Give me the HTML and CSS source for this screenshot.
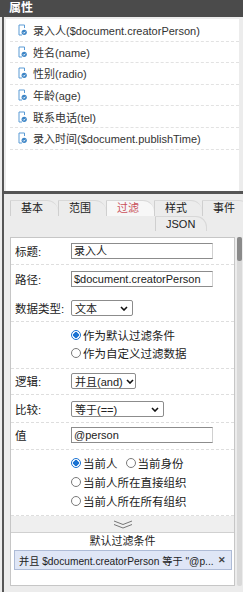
FILE: index.html
```html
<!DOCTYPE html>
<html>
<head>
  <title>属性</title>
  <link rel="stylesheet" href="styles.css">
</head>
<body>
  <div class="title-bar">属性</div>
  <div class="frame">
    <!-- field list -->
    <ul class="field-list">
      <li><svg class="doc-icon" viewBox="0 0 9 12"><path d="M6.5 4V1H1V11H4" fill="none" stroke="#5b9bd5"/><circle cx="6.2" cy="8.3" r="2.6" fill="#3d85c6"/><path d="M5 8.4l.9.9 1.5-1.6" stroke="#fff" stroke-width=".9" fill="none"/></svg>录入人($document.creatorPerson)</li>
      <li><svg class="doc-icon" viewBox="0 0 9 12"><path d="M6.5 4V1H1V11H4" fill="none" stroke="#5b9bd5"/><circle cx="6.2" cy="8.3" r="2.6" fill="#3d85c6"/><path d="M5 8.4l.9.9 1.5-1.6" stroke="#fff" stroke-width=".9" fill="none"/></svg>姓名(name)</li>
      <li><svg class="doc-icon" viewBox="0 0 9 12"><path d="M6.5 4V1H1V11H4" fill="none" stroke="#5b9bd5"/><circle cx="6.2" cy="8.3" r="2.6" fill="#3d85c6"/><path d="M5 8.4l.9.9 1.5-1.6" stroke="#fff" stroke-width=".9" fill="none"/></svg>性别(radio)</li>
      <li><svg class="doc-icon" viewBox="0 0 9 12"><path d="M6.5 4V1H1V11H4" fill="none" stroke="#5b9bd5"/><circle cx="6.2" cy="8.3" r="2.6" fill="#3d85c6"/><path d="M5 8.4l.9.9 1.5-1.6" stroke="#fff" stroke-width=".9" fill="none"/></svg>年龄(age)</li>
      <li><svg class="doc-icon" viewBox="0 0 9 12"><path d="M6.5 4V1H1V11H4" fill="none" stroke="#5b9bd5"/><circle cx="6.2" cy="8.3" r="2.6" fill="#3d85c6"/><path d="M5 8.4l.9.9 1.5-1.6" stroke="#fff" stroke-width=".9" fill="none"/></svg>联系电话(tel)</li>
      <li><svg class="doc-icon" viewBox="0 0 9 12"><path d="M6.5 4V1H1V11H4" fill="none" stroke="#5b9bd5"/><circle cx="6.2" cy="8.3" r="2.6" fill="#3d85c6"/><path d="M5 8.4l.9.9 1.5-1.6" stroke="#fff" stroke-width=".9" fill="none"/></svg>录入时间($document.publishTime)</li>
    </ul>

    <div class="splitter"></div>

    <!-- tabs -->
    <div class="tabs">
      <div class="tab-row">
        <span class="tab">基本</span>
        <span class="tab">范围</span>
        <span class="tab active">过滤</span>
        <span class="tab">样式</span>
        <span class="tab">事件</span>
      </div>
      <div class="tab-row second">
        <span class="tab">JSON</span>
      </div>
    </div>

    <div class="form-wrap">
      <div class="form">
        <div class="row">
          <span class="label">标题:</span>
          <span class="input">录入人</span>
        </div>
        <div class="row stack">
          <div class="line">
            <span class="label">路径:</span>
            <span class="input">$document.creatorPerson</span>
          </div>
          <div class="line">
            <span class="label">数据类型:</span>
            <span class="select w-short">文本<svg class="caret" viewBox="0 0 8 5"><path d="M1 1l3 3 3-3" fill="none" stroke="#111" stroke-width="1.6"/></svg></span>
          </div>
        </div>
        <div class="row radios first-radios">
          <div class="radio-line"><span class="radio checked"></span>作为默认过滤条件</div>
          <div class="radio-line"><span class="radio"></span>作为自定义过滤数据</div>
        </div>
        <div class="row logic">
          <span class="label">逻辑:</span>
          <span class="select w-logic">并且(and)<svg class="caret" viewBox="0 0 8 5"><path d="M1 1l3 3 3-3" fill="none" stroke="#111" stroke-width="1.6"/></svg></span>
        </div>
        <div class="row compare">
          <span class="label">比较:</span>
          <span class="select w-cmp">等于(==)<svg class="caret" viewBox="0 0 8 5"><path d="M1 1l3 3 3-3" fill="none" stroke="#111" stroke-width="1.6"/></svg></span>
        </div>
        <div class="row value">
          <span class="label">值</span>
          <span class="input">@person</span>
        </div>
        <div class="row radios value-radios">
          <div class="radio-line"><span class="radio checked"></span>当前人<span class="radio gap"></span>当前身份</div>
          <div class="radio-line"><span class="radio"></span>当前人所在直接组织</div>
          <div class="radio-line"><span class="radio"></span>当前人所在所有组织</div>
        </div>
        <div class="fold-bar">
          <svg class="chevrons" viewBox="0 0 20 9"><path d="M1 1l9 3.5 9-3.5M1 4.5l9 3.5 9-3.5" fill="none" stroke="#777"/></svg>
        </div>
        <div class="cond-title">默认过滤条件</div>
        <div class="cond-item">
          <span class="cond-text">并且 $document.creatorPerson 等于 "@p...</span>
          <span class="cond-close">✕</span>
        </div>
      </div>
      <div class="scrollbar"><div class="thumb"></div></div>
    </div>
  </div>
</body>
</html>
```

FILE: styles.css
```css
/* property panel */

body {
  margin: 0;
  padding: 0;
  width: 243px;
  height: 592px;
  overflow: hidden;
  background-color: #ececec;
  font-family: "Liberation Sans", "Noto Sans CJK SC", sans-serif;
  font-size: 11px;
  color: #333;
}

.title-bar {
  height: 17px;
  line-height: 17px;
  background-color: #4b4b4b;
  color: #fff;
  font-weight: bold;
  font-size: 12px;
  padding-left: 9px;
}

.frame {
  margin-left: 2px;
  border-left: 2px solid #555;
  height: 575px;
  display: flex;
  flex-direction: column;
}

/* top list */
.field-list {
  list-style: none;
  margin: 2px 4px 0 2px;
  padding: 1px 0 0 4px;
  background-color: #fff;
  height: 171px;
}

.field-list li {
  display: flex;
  align-items: center;
  height: 20.6px;
  padding-left: 8px;
  border-bottom: 1px dashed #e2e2e2;
  white-space: nowrap;
}

.doc-icon {
  width: 9px;
  height: 12px;
  margin-right: 6px;
  flex: none;
}

.splitter {
  height: 3px;
  background-color: #555;
}

/* tabs */
.tabs {
  padding: 6px 0 0 6px;
  height: 35px;
}

.tab-row {
  display: flex;
  height: 16px;
}

.tab-row.second {
  margin-left: 145px;
  height: 15px;
}

.tab {
  box-sizing: border-box;
  width: 48px;
  flex: none;
  padding-left: 10px;
  line-height: 15px;
  border-left: 1px solid #cfcfcf;
  border-top: 1px solid #d8d8d8;
  border-top-right-radius: 11px;
  color: #222;
}

.tab.active {
  color: #c9505a;
  background-color: #f7f7f7;
}

.tab-row.second .tab {
  width: 52px;
  border-right: 1px solid #d8d8d8;
}

/* form panel */
.form-wrap {
  display: flex;
  padding-left: 6px;
  margin-top: 2px;
}

.form {
  box-sizing: border-box;
  width: 225px;
  height: 349px;
  border: 1px solid #c6c6c6;
  background-color: #fff;
}

.scrollbar {
  width: 5px;
  margin-left: 2px;
  height: 349px;
  background-color: #d9d9d9;
  border-radius: 2px;
}

.thumb {
  height: 24px;
  background-color: #8a8a8a;
  border-radius: 2px;
}

.row {
  display: flex;
  align-items: center;
  padding: 5px 0 5px 4px;
  border-bottom: 1px dashed #dedede;
}

.row.stack {
  flex-direction: column;
  align-items: stretch;
  padding-top: 6px;
  gap: 13px;
}

.line {
  display: flex;
  align-items: center;
}

.row.logic { padding: 4px 0 5px 4px; }
.row.compare { padding: 6px 0 5px 4px; }
.row.value { padding: 4px 0 6px 4px; }

.label {
  width: 56px;
  flex: none;
  font-size: 11.5px;
  color: #222;
}

.input {
  box-sizing: border-box;
  width: 142px;
  height: 16px;
  line-height: 14px;
  padding-left: 2px;
  font-size: 11px;
  border: 1px solid #8c8c8c;
  border-right-color: #d0d0d0;
  color: #222;
  white-space: nowrap;
  overflow: hidden;
}

.select {
  box-sizing: border-box;
  display: flex;
  align-items: center;
  justify-content: space-between;
  height: 16px;
  padding: 0 4px 0 3px;
  font-size: 11px;
  border: 1px solid #8c8c8c;
  border-radius: 2px;
  color: #222;
  white-space: nowrap;
}

.w-short { width: 62px; }
.w-logic { width: 65px; }
.w-cmp { width: 93px; }

.caret {
  width: 8px;
  height: 5px;
  flex: none;
  margin-left: 3px;
}

/* radio groups */
.row.radios {
  display: block;
  padding: 4px 0 6px 60px;
}

.row.value-radios {
  padding: 3px 0 5px 60px;
}

.radio-line {
  display: flex;
  align-items: center;
  height: 18px;
  font-size: 11.5px;
  color: #222;
}

.value-radios .radio-line {
  height: 19px;
}

.radio {
  box-sizing: border-box;
  width: 10px;
  height: 10px;
  border: 1px solid #7a7a7a;
  border-radius: 50%;
  margin-right: 2px;
  flex: none;
}

.radio.checked {
  border-color: #1b73d3;
  background: radial-gradient(circle, #1b73d3 0 2.6px, #fff 3px);
}

.radio.gap {
  margin-left: 8px;
}

/* default conditions */
.fold-bar {
  display: flex;
  justify-content: center;
  align-items: center;
  height: 16px;
  background-color: #efefef;
  border-bottom: 1px solid #d0d0d0;
}

.chevrons {
  width: 20px;
  height: 9px;
}

.cond-title {
  text-align: center;
  height: 17px;
  line-height: 17px;
  font-size: 11px;
  color: #222;
}

.cond-item {
  display: flex;
  align-items: center;
  justify-content: space-between;
  margin: 0 2px 0 3px;
  height: 20px;
  box-sizing: border-box;
  padding: 0 5px 0 4px;
  background-color: #dfe6f6;
  border: 1px solid #aebbd6;
  white-space: nowrap;
  font-size: 10.2px;
  color: #222;
}

.cond-close {
  flex: none;
  margin-left: 4px;
  font-size: 9px;
  font-weight: bold;
  color: #444;
}
```
